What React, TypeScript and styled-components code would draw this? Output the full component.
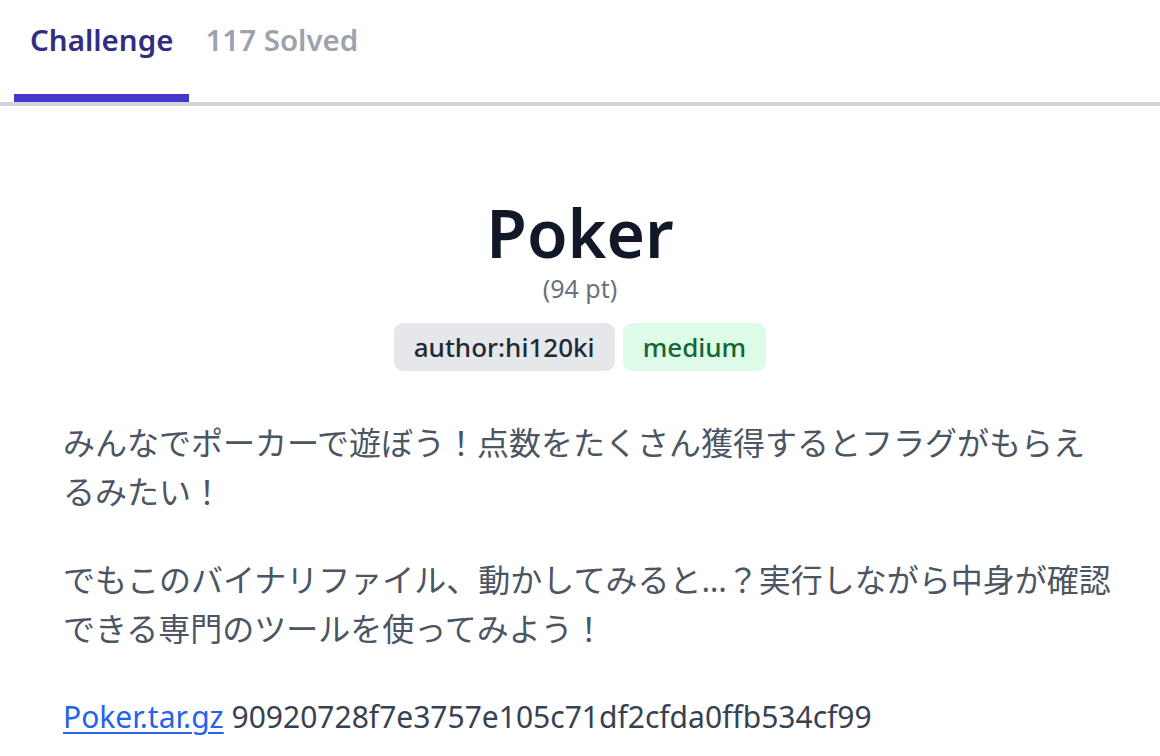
import React from "react";
import styled, { createGlobalStyle } from "styled-components";

const GlobalStyle = createGlobalStyle`
  html, body {
    margin: 0;
    padding: 0;
    background: #ffffff;
  }
  body {
    font-family: "Noto Sans", "Noto Sans CJK JP", sans-serif;
  }
`;

const Page = styled.div`
  width: 1160px;
  min-height: 756px;
  background: #ffffff;
`;

const TabBar = styled.nav`
  display: flex;
  padding-left: 14px;
  border-bottom: 4px solid #d1d5db;
`;

const Tab = styled.div<{ $active?: boolean }>`
  padding: 19px 16px 33px;
  font-size: 29.5px;
  line-height: 42px;
  font-weight: 600;
  color: ${(p) => (p.$active ? "#312e81" : "#9ca3af")};
  border-bottom: 8px solid ${(p) => (p.$active ? "#4338ca" : "transparent")};
  cursor: pointer;
`;

const Main = styled.main`
  padding: 86px 56px 0 63px;
`;

const Header = styled.header`
  display: flex;
  flex-direction: column;
  align-items: center;
  padding-right: 7px;
`;

const Title = styled.h1`
  margin: 0;
  font-size: 66px;
  line-height: 80px;
  font-weight: 600;
  color: #111827;
`;

const Points = styled.div`
  font-size: 25px;
  line-height: 32px;
  color: #6b7280;
`;

const Tags = styled.div`
  display: flex;
  gap: 8px;
  margin-top: 19px;
`;

const Tag = styled.span<{ $tone: "gray" | "green" }>`
  display: inline-flex;
  align-items: center;
  height: 48px;
  padding: 0 20px;
  border-radius: 9px;
  font-size: 26px;
  font-weight: 500;
  background: ${(p) => (p.$tone === "green" ? "#dcfce7" : "#e5e7eb")};
  color: ${(p) => (p.$tone === "green" ? "#166534" : "#1f2937")};
`;

const Body = styled.section`
  margin-top: 47px;
  width: 1052px;
`;

const Paragraph = styled.p`
  margin: 0 0 39px;
  font-size: 32px;
  line-height: 49px;
  color: #4b5563;
`;

const FileLine = styled.p`
  margin: 0;
  font-size: 30px;
  line-height: 49px;
  color: #374151;
`;

const FileLink = styled.a`
  color: #2563eb;
  text-decoration: underline;
  text-underline-offset: 4px;
  text-decoration-thickness: 2px;
`;

export default function App() {
  return (
    <Page>
      <GlobalStyle />
      <TabBar>
        <Tab $active>Challenge</Tab>
        <Tab>117 Solved</Tab>
      </TabBar>
      <Main>
        <Header>
          <Title>Poker</Title>
          <Points>(94 pt)</Points>
          <Tags>
            <Tag $tone="gray">author:hi120ki</Tag>
            <Tag $tone="green">medium</Tag>
          </Tags>
        </Header>
        <Body>
          <Paragraph>
            みんなでポーカーで遊ぼう！点数をたくさん獲得するとフラグがもらえるみたい！
          </Paragraph>
          <Paragraph>
            でもこのバイナリファイル、動かしてみると…？実行しながら中身が確認できる専門のツールを使ってみよう！
          </Paragraph>
          <FileLine>
            <FileLink href="#">Poker.tar.gz</FileLink>{" "}
            90920728f7e3757e105c71df2cfda0ffb534cf99
          </FileLine>
        </Body>
      </Main>
    </Page>
  );
}
